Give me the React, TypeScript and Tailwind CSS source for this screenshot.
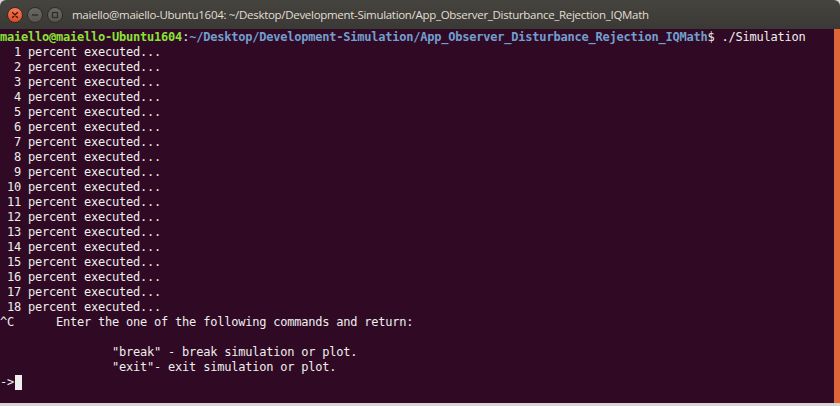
const lines = Array.from({ length: 18 }, (_, i) => `${String(i + 1).padStart(3, " ")} percent executed...`);

const Terminal = () => {
  return (
    <div className="w-[840px] h-[406px] flex flex-col bg-[#d6d5d1] overflow-hidden">
      <div className="h-[29px] flex items-center bg-gradient-to-b from-[#45443f] to-[#3a3935] rounded-t-[6px] shrink-0">
        <div className="flex items-center gap-[4px] pl-[7px]">
          <div className="w-[16px] h-[16px] rounded-full bg-gradient-to-b from-[#f47a56] to-[#df4a24] border border-[#3a2a22] flex items-center justify-center">
            <svg width="8" height="8" viewBox="0 0 8 8">
              <path d="M1.5 1.5 L6.5 6.5 M6.5 1.5 L1.5 6.5" stroke="#3b1a10" strokeWidth="1.4" strokeLinecap="round" />
            </svg>
          </div>
          <div className="w-[16px] h-[16px] rounded-full bg-gradient-to-b from-[#6a6964] to-[#55544f] border border-[#2e2d2a] flex items-center justify-center">
            <svg width="8" height="8" viewBox="0 0 8 8">
              <path d="M1 4 H7" stroke="#2e2d2a" strokeWidth="1.4" />
            </svg>
          </div>
          <div className="w-[16px] h-[16px] rounded-full bg-gradient-to-b from-[#6a6964] to-[#55544f] border border-[#2e2d2a] flex items-center justify-center">
            <svg width="8" height="8" viewBox="0 0 8 8">
              <rect x="1.5" y="1.5" width="5" height="5" fill="none" stroke="#2e2d2a" strokeWidth="1.2" />
            </svg>
          </div>
        </div>
        <div className="pl-[9px] text-[11.5px] text-[#e2ded5] font-['Open_Sans',sans-serif] tracking-[-0.3px] whitespace-nowrap">
          maiello@maiello-Ubuntu1604: ~/Desktop/Development-Simulation/App_Observer_Disturbance_Rejection_IQMath
        </div>
      </div>
      <div className="flex flex-1 min-h-0">
        <div className="flex-1 bg-[#300a24] pt-[1px] font-['DejaVu_Sans_Mono',monospace] text-[12px] leading-[15px] tracking-[-0.22px] text-[#eeeeec] whitespace-pre">
          <div>
            <span className="text-[#8ae234] font-bold">maiello@maiello-Ubuntu1604</span>
            <span>:</span>
            <span className="text-[#729fcf] font-bold">~/Desktop/Development-Simulation/App_Observer_Disturbance_Rejection_IQMath</span>
            <span>$ ./Simulation</span>
          </div>
          {lines.map((l) => (
            <div key={l}>{l}</div>
          ))}
          <div>{"^C      Enter the one of the following commands and return:"}</div>
          <div>{" "}</div>
          <div>{"                \"break\" - break simulation or plot."}</div>
          <div>{"                \"exit\"- exit simulation or plot."}</div>
          <div className="flex items-center">
            <span>{"->"}</span>
            <span className="inline-block w-[7px] h-[15px] ml-[1px] bg-[#eeeeec]" />
          </div>
        </div>
        <div className="w-[6px] bg-[#e0663a] shrink-0" />
      </div>
      <div className="h-[3px] bg-[#d6d5d1] shrink-0" />
    </div>
  );
};

export default function App() {
  return <Terminal />;
}
